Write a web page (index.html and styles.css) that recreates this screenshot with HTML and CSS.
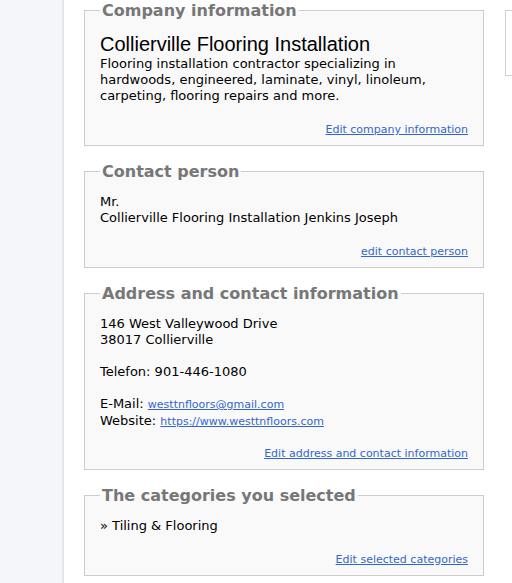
FILE: index.html
```html
<!DOCTYPE html>
<html>
<head>
<meta charset="utf-8">
<link rel="stylesheet" href="styles.css">
</head>
<body>
<div class="page">
  <aside class="sidebar"></aside>
  <main class="main">
    <div class="col-left">
      <fieldset class="box">
        <legend>Company information</legend>
        <div class="company-name">Collierville Flooring Installation</div>
        <div class="text">Flooring installation contractor specializing in hardwoods, engineered, laminate, vinyl, linoleum, carpeting, flooring repairs and more.</div>
        <div class="edit"><a href="#">Edit company information</a></div>
      </fieldset>
      <fieldset class="box">
        <legend>Contact person</legend>
        <div class="text">Mr.<br>Collierville Flooring Installation Jenkins Joseph</div>
        <div class="edit"><a href="#">edit contact person</a></div>
      </fieldset>
      <fieldset class="box">
        <legend>Address and contact information</legend>
        <div class="text">146 West Valleywood Drive<br>38017 Collierville<br><br>Telefon: 901-446-1080<br><br>E-Mail: <a class="small-link" href="#">westtnfloors@gmail.com</a><br>Website: <a class="small-link" href="#">https://www.westtnfloors.com</a></div>
        <div class="edit edit-addr"><a href="#">Edit address and contact information</a></div>
      </fieldset>
      <fieldset class="box">
        <legend>The categories you selected</legend>
        <div class="text">» Tiling &amp; Flooring</div>
        <div class="edit"><a href="#">Edit selected categories</a></div>
      </fieldset>
    </div>
    <div class="col-right">
      <div class="side-box"></div>
    </div>
  </main>
</div>
</body>
</html>
```

FILE: styles.css
```css
html, body {
  margin: 0;
  padding: 0;
  background: #ffffff;
}

.page {
  display: flex;
  width: 512px;
  height: 583px;
  overflow: hidden;
}

.sidebar {
  flex: 0 0 62px;
  background: #f5f6fa;
  border-right: 2px solid #e4e5ea;
}

.main {
  display: flex;
  gap: 21px;
  padding-left: 20px;
  flex: 1 1 auto;
  min-width: 0;
}

.col-left {
  flex: 0 0 400px;
  width: 400px;
}

.col-right {
  flex: 0 0 100px;
}

.side-box {
  margin-top: 10px;
  height: 64px;
  border: 1px solid #d0d0d0;
  background: #ffffff;
}

.box {
  margin: 0 0 15px 0;
  padding: 13px 15px 7px 15px;
  border: 1px solid #cccccc;
  background: #f9f9f9;
  font-family: "DejaVu Sans", Verdana, sans-serif;
  font-size: 13px;
  line-height: 16px;
  color: #000000;
  box-sizing: border-box;
  width: 400px;
  min-width: 0;
}

.box legend {
  padding: 2px 2px 0 2px;
  font-family: "DejaVu Sans", Verdana, sans-serif;
  font-weight: bold;
  font-size: 16px;
  line-height: 18px;
  color: #777777;
}

.company-name {
  font-family: "Liberation Sans", Arial, sans-serif;
  font-size: 20px;
  line-height: 23px;
  color: #000000;
}

.text {
  color: #000000;
}

.small-link {
  font-size: 11px;
  color: #3366cc;
}

.edit {
  margin-top: 18px;
  text-align: right;
  font-size: 11px;
  line-height: 16px;
}

.edit-addr {
  margin-top: 16px;
}

.edit a {
  color: #3366cc;
}
```
